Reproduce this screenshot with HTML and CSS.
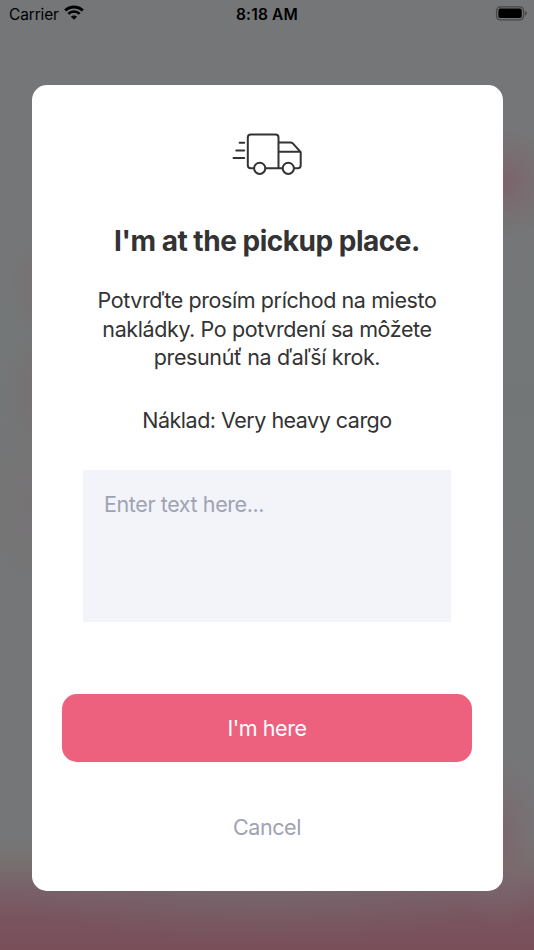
FILE: index.html
```html
<!DOCTYPE html>
<html lang="sk">
<head>
<meta charset="utf-8">
<title>Pickup</title>
<link rel="stylesheet" href="styles.css">
</head>
<body>
<div class="screen">
  <header class="status">
    <div class="status-left">
      <span class="carrier">Carrier</span>
      <svg class="wifi" width="20" height="15" viewBox="0 0 20 15">
        <path d="M1.2 5.6 A12.4 12.4 0 0 1 18.8 5.6" fill="none" stroke="#000" stroke-width="2.9"/>
        <path d="M4.3 8.9 A8 8 0 0 1 15.7 8.9" fill="none" stroke="#000" stroke-width="2.5"/>
        <path d="M6.9 11.7 A4.4 4.4 0 0 1 13.1 11.7 L10 14.8 Z"/>
      </svg>
    </div>
    <span class="time">8:18 AM</span>
    <div class="status-right">
      <svg width="33" height="16" viewBox="0 0 33 16">
        <rect x="2.6" y="1.8" width="27" height="13" rx="3.8" fill="none" stroke="#454647" stroke-width="1.3"/>
        <rect x="4.4" y="3.6" width="23.4" height="9.4" rx="1.8"/>
        <path d="M31 5.9 Q32.7 6.6 32.7 8.3 T31 10.7 Z" fill="#454647"/>
      </svg>
    </div>
  </header>
  <main class="card">
    <svg class="truck" width="71" height="44" viewBox="232 132 71 44" fill="none" stroke="#333" stroke-width="2" stroke-linecap="round" stroke-linejoin="round">
      <path d="M253.5 168.2H250.8Q247.8 168.2 247.8 165.2V137.6Q247.8 134.6 250.8 134.6H275.5Q278.5 134.6 278.5 137.6V168.2M265.7 168.2H282.2M294.4 168.2H297.8Q300.7 168.2 300.7 165.2V152.2L292.8 143.4Q291.8 142.4 290.4 142.4H278.5M278.5 151.8H300.4"/>
      <circle cx="259.7" cy="168.3" r="5.6"/>
      <circle cx="288.3" cy="168.3" r="5.6"/>
      <path d="M239.6 142.8H244.2M236.3 150.4H244.2M233.5 158H244.2"/>
    </svg>
    <h1 class="title">I'm at the pickup place.</h1>
    <p class="message">Potvrďte prosím príchod na miesto<br>nakládky. Po potvrdení sa môžete<br>presunúť na ďaľší krok.</p>
    <p class="cargo">Náklad: Very heavy cargo</p>
    <textarea class="note" placeholder="Enter text here..."></textarea>
    <button class="confirm">I'm here</button>
    <button class="cancel">Cancel</button>
  </main>
</div>
</body>
</html>
```

FILE: styles.css
```css
* { box-sizing: border-box; }
body { margin: 0; font-family: Inter, "Liberation Sans", sans-serif; color: #333; }
.screen {
  width: 534px;
  height: 950px;
  overflow: hidden;
  background:
    radial-gradient(ellipse 60px 56px at 503px 182px, rgba(124, 98, 105, .95), rgba(123, 104, 109, .55) 50%, rgba(118, 116, 118, 0)),
    radial-gradient(ellipse 50px 90px at 500px 840px, rgba(124, 98, 105, .85), rgba(123, 104, 109, .45) 50%, rgba(118, 116, 118, 0)),
    radial-gradient(ellipse 26px 50px at 36px 285px, rgba(122, 108, 112, .6), rgba(122, 108, 112, 0)),
    radial-gradient(ellipse 30px 60px at 36px 390px, rgba(122, 108, 112, .6), rgba(122, 108, 112, 0)),
    radial-gradient(ellipse 36px 100px at 26px 500px, rgba(122, 110, 114, .4), rgba(122, 110, 114, 0)),
    radial-gradient(ellipse 260px 60px at 267px 885px, rgba(118, 106, 110, .6), rgba(118, 106, 110, 0)),
    linear-gradient(#757678 0, #737676 400px, #757678 838px, #77706f 862px, #79626a 885px, #79545f 918px, #794f5a 950px);
}
.status {
  display: grid;
  grid-template-columns: 1fr auto 1fr;
  align-items: center;
  height: 28px;
  padding: 0 7px 0 9px;
  color: #000;
  font-size: 15.5px;
}
.status-left { display: flex; align-items: center; gap: 5px; }
.carrier { letter-spacing: -.15px; }
.wifi { margin-top: -3px; }
.time { font-weight: 600; letter-spacing: .2px; margin-left: -2px; }
.status-right { display: flex; justify-content: flex-end; margin-top: -2px; }
.card {
  display: flex;
  flex-direction: column;
  align-items: center;
  width: 471px;
  height: 806px;
  margin: 57px auto 0;
  padding-top: 47px;
  border-radius: 15px;
  background: #fff;
}
.title { margin: 47px 0 0; font-size: 28px; line-height: 36px; font-weight: 700; letter-spacing: -.48px; }
.message, .cargo { margin: 0; font-size: 21.5px; line-height: 28.5px; letter-spacing: -.4px; text-align: center; }
.message { margin-top: 27px; }
.cargo { margin-top: 34.5px; letter-spacing: -.5px; }
.note {
  display: block;
  width: 368px;
  height: 152px;
  margin-top: 35.5px;
  padding: 20px 21px;
  border: 0;
  resize: none;
  background: #f3f4f9;
  font: 21.5px/28px Inter, "Liberation Sans", sans-serif;
  letter-spacing: -.4px;
}
.note::placeholder { color: #9ea3b3; opacity: 1; }
.confirm, .cancel { border: 0; padding: 0; font: 21.5px/28px Inter, "Liberation Sans", sans-serif; letter-spacing: -.45px; }
.confirm { width: 410px; height: 68px; margin-top: 72px; border-radius: 15px; background: #ed607e; color: #fff; }
.cancel { margin-top: 51px; background: none; color: #9ea2b2; }
```
